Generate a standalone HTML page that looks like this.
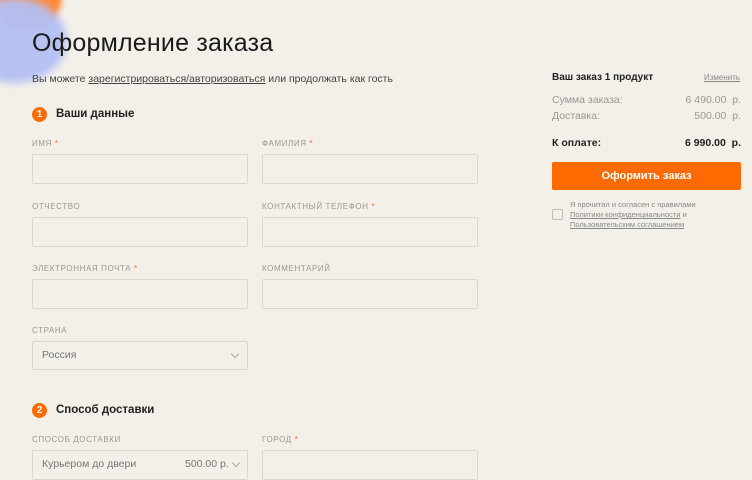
<!DOCTYPE html><html><head><meta charset="utf-8"><style>
*{margin:0;padding:0;box-sizing:border-box}
body{width:752px;height:478px;overflow:hidden;background:#f3f0ea;font-family:"Liberation Sans",sans-serif;position:relative;color:#222}
.a{position:absolute}
.lbl{position:absolute;font-size:8px;letter-spacing:.6px;color:#9a9894}
.lbl b{color:#f26b1d;font-weight:normal}
.in{position:absolute;width:216px;height:30px;border:1px solid #dcd8d0;border-radius:2px;background:#f3f0ea}
.num{position:absolute;width:15px;height:15px;border-radius:50%;background:#ff6b00;color:#fff;font-size:10px;text-align:center;line-height:15px;font-weight:bold}
.h{position:absolute;font-size:11.5px;font-weight:bold;color:#222}
.chev{position:absolute;width:6px;height:6px;border-right:1px solid #aaa;border-bottom:1px solid #aaa;transform:rotate(45deg)}
.r{position:absolute;font-size:10.5px;color:#9a9894}
</style></head><body>
<div class="a" style="left:-8px;top:-35px;width:70px;height:65px;border-radius:50%;background:#ff8a3a;filter:blur(3px)"></div>
<div class="a" style="left:-38px;top:-2px;width:105px;height:85px;border-radius:50%;background:#b3bff5;filter:blur(4px);opacity:.95"></div>
<div class="a" style="left:32px;top:29px;font-size:25px;color:#1a1a1a;letter-spacing:.2px">Оформление заказа</div>
<div class="a" style="left:32px;top:73px;font-size:10.5px;color:#444">Вы можете <span style="text-decoration:underline">зарегистрироваться/авторизоваться</span> или продолжать как гость</div>
<div class="num" style="left:32px;top:107px">1</div><div class="h" style="left:56px;top:108px">Ваши данные</div>
<div class="lbl" style="left:32px;top:139px">ИМЯ <b>*</b></div><div class="in" style="left:32px;top:154px"></div>
<div class="lbl" style="left:262px;top:139px">ФАМИЛИЯ <b>*</b></div><div class="in" style="left:262px;top:154px"></div>
<div class="lbl" style="left:32px;top:202px">ОТЧЕСТВО</div><div class="in" style="left:32px;top:217px"></div>
<div class="lbl" style="left:262px;top:202px">КОНТАКТНЫЙ ТЕЛЕФОН <b>*</b></div><div class="in" style="left:262px;top:217px"></div>
<div class="lbl" style="left:32px;top:264px">ЭЛЕКТРОННАЯ ПОЧТА <b>*</b></div><div class="in" style="left:32px;top:279px"></div>
<div class="lbl" style="left:262px;top:264px">КОММЕНТАРИЙ</div><div class="in" style="left:262px;top:279px"></div>
<div class="lbl" style="left:32px;top:326px">СТРАНА</div><div class="in" style="left:32px;top:341px;height:29px"></div>
<div class="a" style="left:42px;top:349px;font-size:10.5px;color:#777">Россия</div><div class="chev" style="left:232px;top:351px"></div>
<div class="num" style="left:32px;top:403px">2</div><div class="h" style="left:56px;top:404px">Способ доставки</div>
<div class="lbl" style="left:32px;top:435px">СПОСОБ ДОСТАВКИ</div><div class="in" style="left:32px;top:450px"></div>
<div class="a" style="left:42px;top:458px;font-size:10.5px;color:#777">Курьером до двери</div><div class="a" style="left:185px;top:458px;font-size:10.5px;color:#777">500.00 р.</div><div class="chev" style="left:233px;top:460px"></div>
<div class="lbl" style="left:262px;top:435px">ГОРОД <b>*</b></div><div class="in" style="left:262px;top:450px"></div>
<div class="a" style="left:552px;top:72px;font-size:10px;font-weight:bold;color:#222">Ваш заказ 1 продукт</div>
<div class="a" style="left:704px;top:73px;font-size:8px;color:#888;text-decoration:underline">Изменить</div>
<div class="r" style="left:552px;top:94px">Сумма заказа:</div><div class="r" style="right:11px;top:94px">6 490.00&nbsp; р.</div>
<div class="r" style="left:552px;top:110px">Доставка:</div><div class="r" style="right:11px;top:110px">500.00&nbsp; р.</div>
<div class="a" style="left:552px;top:137px;font-size:10.5px;font-weight:bold">К оплате:</div><div class="a" style="right:11px;top:137px;font-size:10.5px;font-weight:bold">6 990.00&nbsp; р.</div>
<div class="a" style="left:552px;top:162px;width:189px;height:28px;background:#ff6b00;border-radius:2px;color:#fff;font-size:11px;font-weight:bold;text-align:center;line-height:28px">Оформить заказ</div>
<div class="a" style="left:552px;top:209px;width:11px;height:11px;border:1px solid #bbb;border-radius:2px"></div>
<div class="a" style="left:570px;top:200px;font-size:7.5px;line-height:10px;color:#888">Я прочитал и согласен с правилами<br><u>Политики конфиденциальности</u> и<br><u>Пользовательским соглашением</u></div>
</body></html>
